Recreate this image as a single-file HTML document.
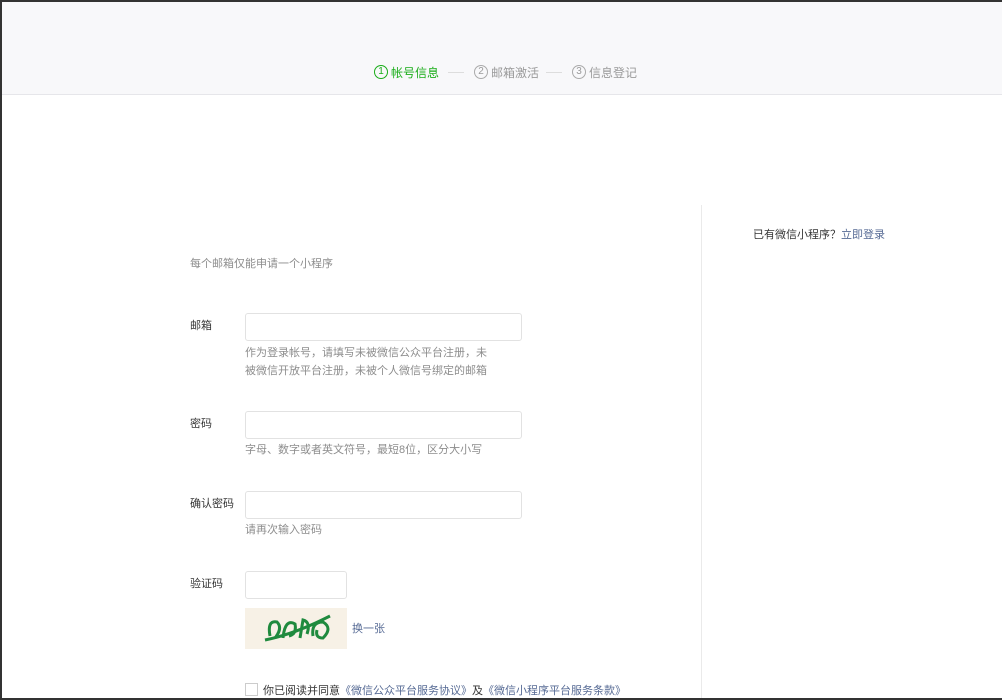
<!DOCTYPE html>
<html><head><meta charset="utf-8"><style>
*{margin:0;padding:0;box-sizing:border-box}
body{width:1002px;height:700px;overflow:hidden;background:#fff;font-family:"Liberation Sans","Noto Sans CJK SC",sans-serif;font-size:11px;color:#353535;position:relative}
.frame{position:absolute;left:0;top:0;width:1002px;height:700px;border-top:2px solid #333;border-left:2px solid #333;border-bottom:2px solid #333;pointer-events:none}
.hd{position:absolute;left:0;top:0;width:1002px;height:95px;background:#f8f8fa;border-bottom:1px solid #e6e6ea}
.steps{position:absolute;top:64px;left:374px;font-size:12px;color:#9a9a9a;white-space:nowrap}
.steps span{position:absolute;white-space:nowrap;display:flex;align-items:center;height:16px}
.c{display:inline-block;width:14px;height:14px;border:1px solid #aaa;border-radius:50%;font-size:10px;line-height:12px;text-align:center;margin-right:3px;font-style:normal}
.on{color:#1aad19}.on .c{border-color:#1aad19}
.dash{position:absolute;top:8px;width:16px;border-top:1px solid #ddd}
.abs{position:absolute;white-space:nowrap}
.lab{color:#353535}
.tip{color:#8d8d8d;line-height:18px}
.inp{position:absolute;border:1px solid #e2e2e2;border-radius:3px;background:#fff;height:28px}
a{color:#576b95;text-decoration:none}
.vline{position:absolute;left:701px;top:205px;width:1px;height:495px;background:#eaeaea}
</style></head><body>
<div class="hd"></div>
<div class="steps">
<span class="on" style="left:0"><i class="c">1</i>帐号信息</span>
<div class="dash" style="left:74px"></div>
<span style="left:100px"><i class="c">2</i>邮箱激活</span>
<div class="dash" style="left:172px"></div>
<span style="left:198px"><i class="c">3</i>信息登记</span>
</div>
<div class="vline"></div>
<div class="abs" style="left:753px;top:226px">已有微信小程序？<a>立即登录</a></div>
<div class="abs tip" style="left:190px;top:255px">每个邮箱仅能申请一个小程序</div>

<div class="abs lab" style="left:190px;top:317px">邮箱</div>
<div class="inp" style="left:245px;top:313px;width:277px"></div>
<div class="abs tip" style="left:245px;top:344px">作为登录帐号，请填写未被微信公众平台注册，未<br>被微信开放平台注册，未被个人微信号绑定的邮箱</div>

<div class="abs lab" style="left:190px;top:415px">密码</div>
<div class="inp" style="left:245px;top:411px;width:277px"></div>
<div class="abs tip" style="left:245px;top:441px">字母、数字或者英文符号，最短8位，区分大小写</div>

<div class="abs lab" style="left:190px;top:495px">确认密码</div>
<div class="inp" style="left:245px;top:491px;width:277px"></div>
<div class="abs tip" style="left:245px;top:521px">请再次输入密码</div>

<div class="abs lab" style="left:190px;top:575px">验证码</div>
<div class="inp" style="left:245px;top:571px;width:102px"></div>
<svg class="abs" style="left:245px;top:608px" width="102" height="41" viewBox="0 0 102 41">
<rect width="102" height="41" fill="#f7f1e6"/>
<g fill="none" stroke="#1f8a3e" stroke-width="3">
<path d="M20 32 Q50 26 85 8"/>
<path d="M25 28 Q22 12 32 14 Q38 20 30 30"/>
<path d="M38 30 Q40 10 50 16 Q52 26 44 28"/>
<path d="M55 30 L58 12 Q66 14 62 26"/>
<path d="M68 28 Q66 14 78 14 Q88 20 78 30 Q70 30 72 22"/>
</g></svg>
<div class="abs" style="left:352px;top:620px"><a>换一张</a></div>

<div class="abs" style="left:245px;top:683px;width:13px;height:13px;border:1px solid #ccc;background:#fff"></div>
<div class="abs" style="left:263px;top:682px">你已阅读并同意<a>《微信公众平台服务协议》</a>及<a>《微信小程序平台服务条款》</a></div>
<div class="frame"></div>
</body></html>
